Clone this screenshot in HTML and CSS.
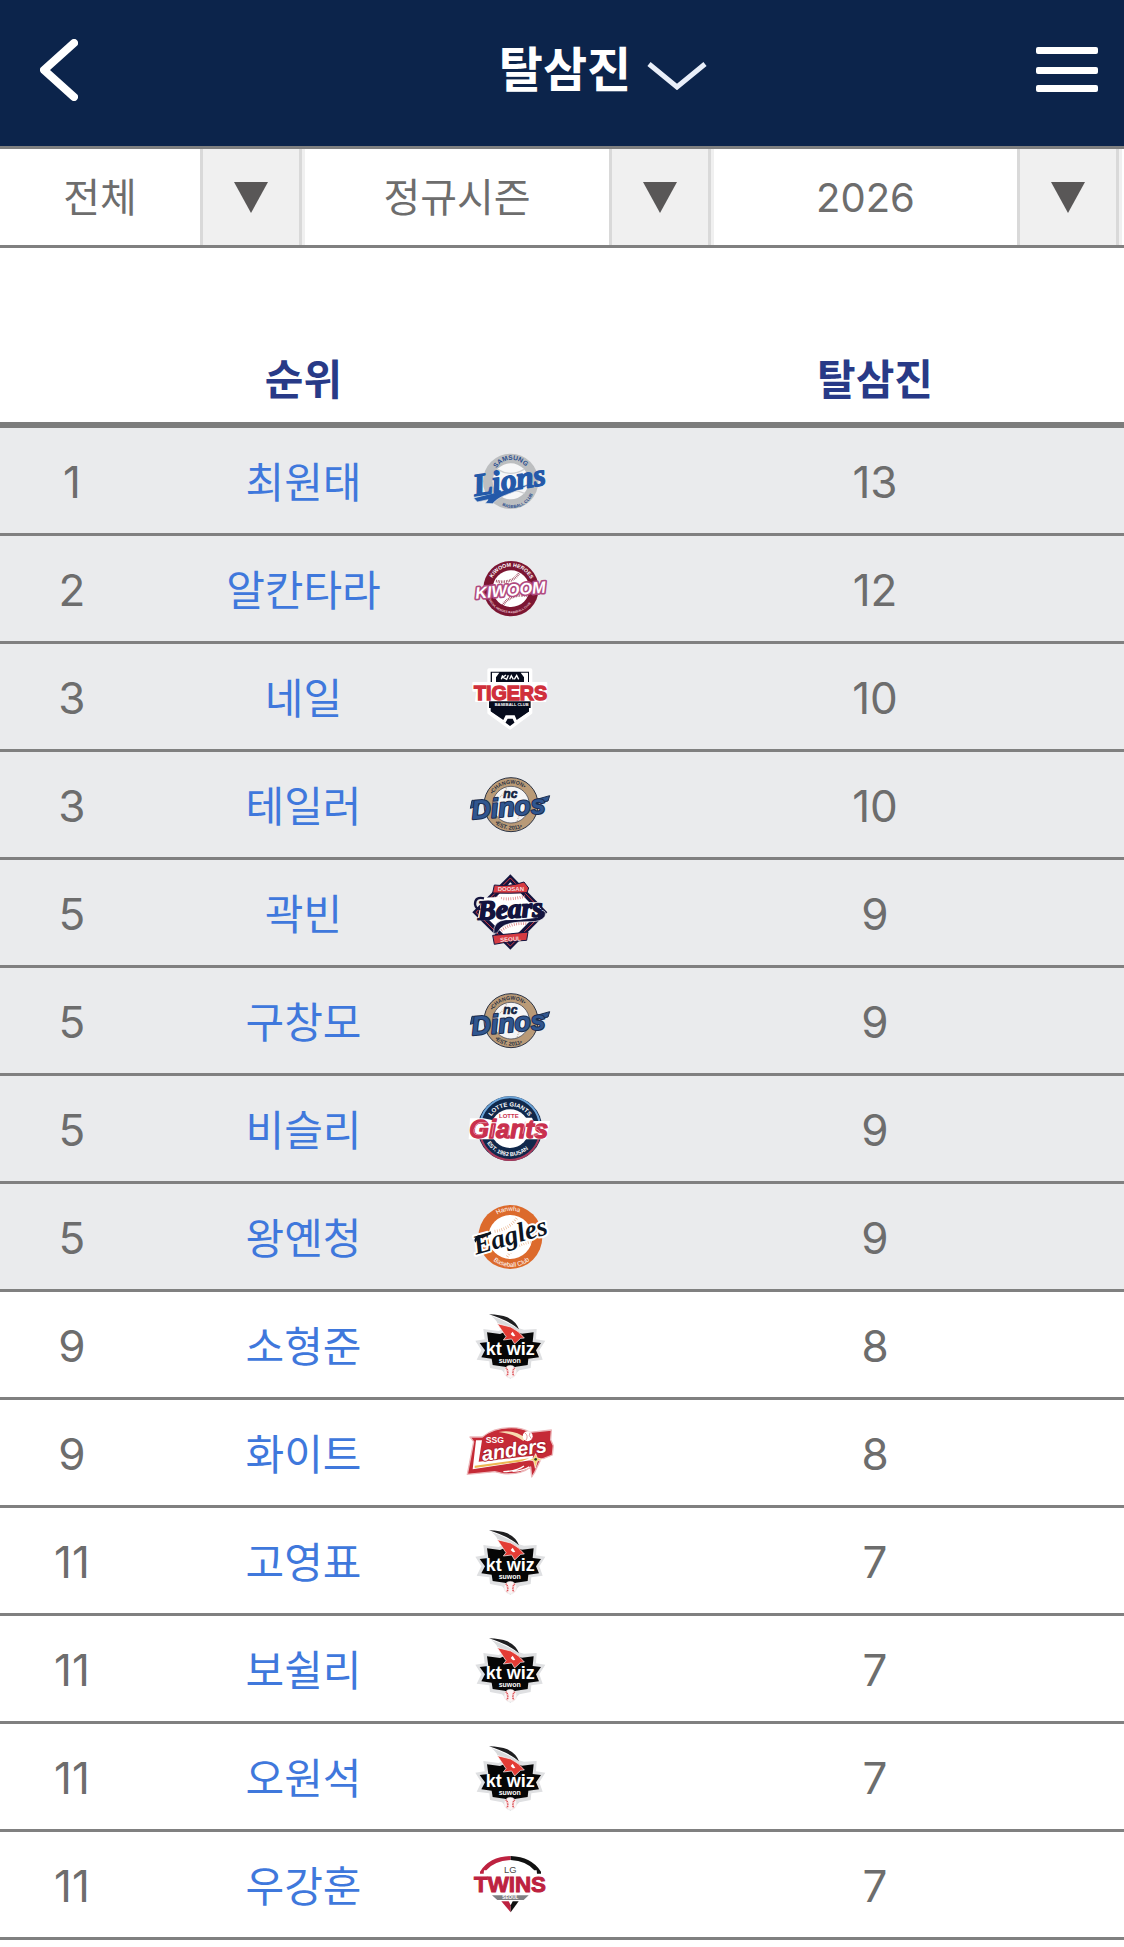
FILE: index.html
```html
<!DOCTYPE html>
<html lang="ko">
<head>
  <meta charset="UTF-8" />
  <meta name="viewport" content="width=device-width, initial-scale=1.0"/>
  <title>탈삼진</title>
  <link rel="stylesheet" href="styles.css">
</head>
<body>

  <header class="header">
    <button class="icon-btn" type="button" aria-label="뒤로">
      <svg width="38" height="62" viewBox="0 0 38 62">
        <path d="M34 4 L4 31 L34 58" fill="none" stroke="#fff" stroke-width="8" stroke-linecap="round" stroke-linejoin="round"/>
      </svg>
    </button>
    <h1>
      <button class="title-btn" type="button">
        <span>탈삼진</span>
        <svg width="60" height="28" viewBox="0 0 60 28">
          <path d="M2 2 L30 25 L58 2" fill="none" stroke="#e9effa" stroke-width="5"/>
        </svg>
      </button>
    </h1>
    <button class="icon-btn menu-btn" type="button" aria-label="메뉴">
      <svg width="62" height="46" viewBox="0 0 62 46">
        <rect width="62" height="7" rx="2" fill="#fff"/>
        <rect y="20" width="62" height="7" rx="2" fill="#fff"/>
        <rect y="38" width="62" height="7" rx="2" fill="#fff"/>
      </svg>
    </button>
  </header>

  <div class="filters">
    <div class="filter">
      <select aria-label="구분"><option>전체</option></select>
      <span class="arrow"><svg width="34" height="31" viewBox="0 0 34 31"><path d="M0 0 H34 L17 31 Z" fill="#595757"/></svg></span>
    </div>
    <div class="filter">
      <select aria-label="시즌"><option>정규시즌</option></select>
      <span class="arrow"><svg width="34" height="31" viewBox="0 0 34 31"><path d="M0 0 H34 L17 31 Z" fill="#595757"/></svg></span>
    </div>
    <div class="filter">
      <select aria-label="연도"><option>2026</option></select>
      <span class="arrow"><svg width="34" height="31" viewBox="0 0 34 31"><path d="M0 0 H34 L17 31 Z" fill="#595757"/></svg></span>
    </div>
  </div>

  <table class="ranking">
    <colgroup>
      <col class="col-rank">
      <col class="col-name">
      <col class="col-team">
      <col class="col-stat">
    </colgroup>
    <thead>
      <tr><td></td><th scope="col">순위</th><td></td><th scope="col">탈삼진</th></tr>
    </thead>
    <tbody>
      <tr class="top">
        <td>1</td>
        <td><a href="#">최원태</a></td>
        <td class="team">
          <svg viewBox="69 25 282 252" role="img" aria-label="삼성">
            <path id="lions-top" d="M169 113 A54 54 0 0 1 264 120" fill="none"/>
            <path id="lions-bottom" d="M186 224 A66 66 0 0 0 280 186" fill="none"/>
            <circle cx="212" cy="152" r="83" fill="#bcbec0"/>
            <circle cx="212" cy="152" r="54" fill="#f7f7f8"/>
            <path d="M172 116 Q212 140 252 116 M176 196 Q212 168 254 188" fill="none" stroke="#cfd0d2" stroke-width="4"/>
            <text class="sans" font-size="20" fill="#2b4f8f"><textPath href="#lions-top">SAMSUNG</textPath></text>
            <text class="sans" font-size="13" fill="#2b4f8f"><textPath href="#lions-bottom">BASEBALL CLUB</textPath></text>
            <path d="M101 202 L140 192 L278 158 Q235 180 200 192 Q172 202 158 219 L136 218 L144 207 L112 214 Z" fill="#2459a9" stroke="#e3e5e8" stroke-width="2"/>
            <text class="serif outline" transform="translate(104 196) rotate(-9)" font-size="94" fill="#2459a9" stroke="#2459a9" stroke-width="4">Lions</text>
          </svg>
        </td>
        <td>13</td>
      </tr>
      <tr class="top">
        <td>2</td>
        <td><a href="#">알칸타라</a></td>
        <td class="team">
          <svg viewBox="69 350 282 252" role="img" aria-label="키움">
            <path id="kiwoom-top" d="M157 443 A64 64 0 0 1 276 460" fill="none"/>
            <path id="kiwoom-bottom" d="M146 508 A75 75 0 0 0 282 502" fill="none"/>
            <circle cx="213" cy="475" r="83" fill="#7c1632"/>
            <circle cx="213" cy="475" r="55" fill="#fff"/>
            <path d="M168 452 Q216 462 238 427 M188 525 Q210 490 262 496" fill="none" stroke="#8d2740" stroke-width="8" stroke-dasharray="2 3"/>
            <text class="sans" font-size="16" fill="#fff"><textPath href="#kiwoom-top">KIWOOM HEROES</textPath></text>
            <text class="sans" font-size="9" fill="#e9c8d2"><textPath href="#kiwoom-bottom">SEOUL HEROES BASEBALL CLUB</textPath></text>
            <text class="sans italic outline" transform="translate(107 505) rotate(-5)" font-size="49" fill="#fff" stroke="#b04a80" stroke-width="10">KIWOOM</text>
          </svg>
        </td>
        <td>12</td>
      </tr>
      <tr class="top">
        <td>3</td>
        <td><a href="#">네일</a></td>
        <td class="team">
          <svg viewBox="69 13 282 252" role="img" aria-label="KIA">
            <path d="M147 58 H272 V186 L210 232 L147 186 Z" fill="#060b1c" stroke="#fff" stroke-width="10" stroke-linejoin="round"/>
            <path d="M156 66 H178 L168 80 V96 H156 Z M264 66 H242 L252 80 V96 H264 Z" fill="#fff"/>
            <path d="M149 180 L190 208 L197 194 H224 L230 208 L271 180 V186 L224 217 L218 204 H203 L196 217 L149 186 Z" fill="#fff"/>
            <path d="M184 86 L188 74 M185 82 L198 73 M189 80 L200 86 L205 74 M209 86 L214 75 L220 86 M223 86 L230 74 L236 86" fill="none" stroke="#fff" stroke-width="4"/>
            <path d="M100 97 H319 V112 L316 151 H108 L112 120 H100 Z" fill="#fff" stroke="#fff" stroke-width="6" stroke-linejoin="round"/>
            <path d="M147 152 H272 V172 H147 Z" fill="#060b1c"/>
            <text class="sans" x="102" y="147" font-size="59" fill="#d0303c" stroke="#d0303c" stroke-width="4">TIGERS</text>
            <text class="sans" x="164" y="165" font-size="12" fill="#fff">BASEBALL CLUB</text>
          </svg>
        </td>
        <td>10</td>
      </tr>
      <tr class="top">
        <td>3</td>
        <td><a href="#">테일러</a></td>
        <td class="team">
          <svg viewBox="69 338 282 252" role="img" aria-label="NC">
            <g id="dinos">
              <path id="dinos-top" d="M158 432 A64 64 0 0 1 274 444" fill="none"/>
              <path id="dinos-bottom" d="M164 518 A74 74 0 0 0 274 508" fill="none"/>
              <circle cx="213" cy="463" r="81" fill="#b99a77" stroke="#2c3445" stroke-width="3"/>
              <circle cx="213" cy="463" r="55" fill="#f5f5f6" stroke="#2c3445" stroke-width="2"/>
              <path d="M164 448 Q190 440 200 412 M232 512 Q236 490 264 478" fill="none" stroke="#c9b7a5" stroke-width="4" stroke-dasharray="3 3"/>
              <text class="sans" font-size="16" fill="#2c3445"><textPath href="#dinos-top">•CHANGWON•</textPath></text>
              <text class="sans" font-size="17" fill="#2c3445"><textPath href="#dinos-bottom">•EST. 2011•</textPath></text>
              <text class="sans italic" x="190" y="443" font-size="36" fill="#14233f" stroke="#14233f" stroke-width="2">nc</text>
              <path d="M91 474 L96 450 H122 L116 466 Z" fill="#30568f" stroke="#1b2d4f" stroke-width="3"/>
              <path d="M283 449 L329 436 L324 452 L290 460 Z" fill="#30568f" stroke="#1b2d4f" stroke-width="3"/>
              <text class="sans italic outline" transform="translate(97 507) rotate(-5)" font-size="80" fill="#30568f" stroke="#1b2d4f" stroke-width="6">Dinos</text>
            </g>
          </svg>
        </td>
        <td>10</td>
      </tr>
      <tr class="top">
        <td>5</td>
        <td><a href="#">곽빈</a></td>
        <td class="team">
          <svg viewBox="69 32 282 252" role="img" aria-label="두산">
            <path d="M211 42 L322 156 L211 268 L97 156 Z" fill="#14143e"/>
            <path d="M211 53 L311 156 L211 257 L108 156 Z" fill="none" stroke="#d63b42" stroke-width="3"/>
            <path d="M211 66 L296 156 L211 242 L124 156 Z" fill="#fff"/>
            <path d="M163 111 Q208 122 256 107 M184 210 Q216 186 260 190" fill="none" stroke="#dc6d72" stroke-width="9" stroke-dasharray="2 5"/>
            <path d="M163 74 Q208 80 252 65 L266 83 L261 97 Q210 100 158 98 Z" fill="#d63b42" stroke="#14143e" stroke-width="3"/>
            <path d="M158 225 Q210 221 264 215 L260 240 L214 243 L163 252 Z" fill="#d63b42" stroke="#14143e" stroke-width="3"/>
            <text class="sans" x="173" y="92" font-size="18" fill="#f8dcdc">DOOSAN</text>
            <text class="sans" transform="translate(181 245) rotate(-4)" font-size="18" fill="#f8dcdc">SEOUL</text>
            <path d="M161 220 Q158 182 198 178 Q258 178 294 170 L306 150 Q320 152 315 168 Q305 185 270 184 Q200 183 181 204 Q176 214 170 218 Z" fill="#14143e" stroke="#fff" stroke-width="2"/>
            <path d="M112 180 L126 112 L180 110 L192 126 L300 126 L306 160 L240 178 Z" fill="#fff"/>
            <text class="serif outline" transform="translate(114 178) rotate(-3)" font-size="82" fill="#14143e" stroke="#14143e" stroke-width="5">Bears</text>
            <path d="M132 114 Q105 108 105 132 Q108 148 121 145" fill="none" stroke="#14143e" stroke-width="7"/>
          </svg>
        </td>
        <td>9</td>
      </tr>
      <tr class="top">
        <td>5</td>
        <td><a href="#">구창모</a></td>
        <td class="team">
          <svg viewBox="69 338 282 252" role="img" aria-label="NC"><use href="#dinos"/></svg>
        </td>
        <td>9</td>
      </tr>
      <tr class="top">
        <td>5</td>
        <td><a href="#">비슬리</a></td>
        <td class="team">
          <svg viewBox="69 20 282 252" role="img" aria-label="롯데">
            <path id="giants-top" d="M154 108 A67 67 0 0 1 276 135" fill="none"/>
            <path id="giants-bottom" d="M141 188 A81 81 0 0 0 284 180" fill="none"/>
            <circle cx="210" cy="145" r="97" fill="#10284b"/>
            <path d="M122 122 A90 90 0 0 1 298 122" fill="none" stroke="#6ba4d9" stroke-width="6"/>
            <path d="M122 168 A90 90 0 0 0 298 168" fill="none" stroke="#a83a5b" stroke-width="6"/>
            <circle cx="210" cy="145" r="58" fill="#fff"/>
            <text class="sans" font-size="18" fill="#fff"><textPath href="#giants-top">LOTTE GIANTS</textPath></text>
            <text class="sans" font-size="17" fill="#fff"><textPath href="#giants-bottom">EST. 1982 BUSAN</textPath></text>
            <text class="sans" x="177" y="114" font-size="18" fill="#c9304e">LOTTE</text>
            <path d="M90 114 H130 L160 120 H242 L252 112 H276 L280 122 H330 L318 177 H86 Z" fill="#fff"/>
            <text class="sans italic outline" x="88" y="172" font-size="76" fill="#c9304e" stroke="#c9304e" stroke-width="4">Giants</text>
            <path d="M140 127 H118 Q107 129 102 148 Q100 163 112 163 H126 L129 147 M161 133 L155 169 M208 140 L203 169 M256 124 L248 160 M308 139 Q285 135 287 145 Q303 152 299 161 Q290 167 273 163" fill="none" stroke="#f0b9c4" stroke-width="2"/>
          </svg>
        </td>
        <td>9</td>
      </tr>
      <tr class="top">
        <td>5</td>
        <td><a href="#">왕옌청</a></td>
        <td class="team">
          <svg viewBox="69 343 282 252" role="img" aria-label="한화">
            <path id="eagles-top" d="M172 402 A78 78 0 0 1 262 408" fill="none"/>
            <path id="eagles-bottom" d="M160 540 A88 88 0 0 0 284 524" fill="none"/>
            <circle cx="211" cy="469" r="96" fill="#dc6a2c"/>
            <circle cx="211" cy="469" r="66" fill="#fff"/>
            <path d="M164 452 Q208 446 232 410 M202 528 Q224 492 272 484" fill="none" stroke="#e9b48f" stroke-width="9" stroke-dasharray="2 5"/>
            <text class="plain" font-size="19" fill="#fff"><textPath href="#eagles-top">Hanwha</textPath></text>
            <text class="plain" font-size="19" fill="#fff"><textPath href="#eagles-bottom">Baseball Club</textPath></text>
            <text class="serif outline" transform="translate(108 522) rotate(-16)" font-size="82" fill="#0c1522" stroke="#fff" stroke-width="12">Eagles</text>
            <path d="M103 478 Q108 460 128 464 L152 452 L154 460 L128 472 Q114 470 106 486 Z" fill="#0c1522"/>
          </svg>
        </td>
        <td>9</td>
      </tr>
      <tr>
        <td>9</td>
        <td><a href="#">소형준</a></td>
        <td class="team">
          <svg viewBox="69 8 282 252" role="img" aria-label="KT">
            <g id="wiz">
              <path d="M130 86 L176 92 L210 76 L252 88 L290 86 L288 117 L316 121 L298 150 L308 178 L274 183 L272 203 L238 210 L211 236 L186 210 L150 203 L148 183 L110 178 L124 150 L106 121 L134 117 Z" fill="#dfe0e2"/>
              <path d="M141 96 L180 101 L210 88 L246 100 L281 96 L278 125 L303 128 L288 150 L297 171 L265 175 L263 194 L228 199 L211 207 L194 199 L158 194 L155 175 L124 171 L135 150 L119 128 L145 125 Z" fill="#060606"/>
              <path d="M147 42 Q181 43 202 51 Q228 62 237 87 L224 77 Q197 58 147 42 Z" fill="#1f1f21"/>
              <path d="M154 47 Q190 58 225 80 L239 96 L210 86 L172 68 Q170 60 154 47 Z" fill="#d9dadc"/>
              <path d="M172 70 L212 80 Q236 91 253 113 L242 114 L224 131 L215 116 L190 119 L198 109 Z" fill="#e33c35" stroke="#fff" stroke-width="2"/>
              <path d="M212 101 L218 94 L226 107 L219 108 Z" fill="#fff"/>
              <circle cx="211" cy="214" r="19" fill="#faf4f4" stroke="#e3e0e0" stroke-width="1"/>
              <path d="M198 202 Q207 214 201 227 M224 202 Q215 214 221 227" fill="none" stroke="#dd4a50" stroke-width="5" stroke-dasharray="3 2"/>
              <text class="sans" x="137" y="165" font-size="54" fill="#fff">kt wiz</text>
              <text class="sans" x="176" y="187" font-size="21" fill="#fff">suwon</text>
            </g>
          </svg>
        </td>
        <td>8</td>
      </tr>
      <tr>
        <td>9</td>
        <td><a href="#">화이트</a></td>
        <td class="team">
          <svg viewBox="69 332 282 252" role="img" aria-label="SSG">
            <path d="M90 410 L127 410 Q160 382 214 382 Q248 382 270 396 L334 389 L332 418 L340 436 L337 464 L302 478 L284 516 L275 530 L272 500 Q242 524 190 520 L164 514 L82 522 L101 424 Z" fill="#c52a36" stroke="#ecb7ba" stroke-width="4" stroke-linejoin="round"/>
            <path d="M176 395 Q222 386 258 414 L250 422 Q222 400 176 395 Z" fill="#f7dcb1"/>
            <circle cx="263" cy="408" r="15" fill="#fff"/>
            <path d="M255 398 Q266 406 258 420 M270 397 Q264 406 274 415" fill="none" stroke="#d9666c" stroke-width="2"/>
            <text class="sans" x="137" y="427" font-size="26" fill="#fff">SSG</text>
            <path d="M108 420 H126 L116 484 L242 470 L280 466 L276 479 L98 507 Z" fill="#fff"/>
            <path d="M104 496 L268 474 L240 484 L104 503 Z" fill="#edb652"/>
            <path d="M190 514 Q232 512 252 497 M218 513 Q252 511 268 499" fill="none" stroke="#fff" stroke-width="4"/>
            <text class="sans italic outline" transform="translate(128 482) rotate(-8)" font-size="60" fill="#fff" stroke="#a81d2b" stroke-width="5">anders</text>
            <path d="M287 460 L292 473 L309 477 L292 482 L286 504 L281 482 L268 478 L281 473 Z" fill="#f6d36b" stroke="#fff" stroke-width="2"/>
            <circle cx="287" cy="477" r="4" fill="#25442c"/>
          </svg>
        </td>
        <td>8</td>
      </tr>
      <tr>
        <td>11</td>
        <td><a href="#">고영표</a></td>
        <td class="team">
          <svg viewBox="69 8 282 252" role="img" aria-label="KT"><use href="#wiz"/></svg>
        </td>
        <td>7</td>
      </tr>
      <tr>
        <td>11</td>
        <td><a href="#">보쉴리</a></td>
        <td class="team">
          <svg viewBox="69 8 282 252" role="img" aria-label="KT"><use href="#wiz"/></svg>
        </td>
        <td>7</td>
      </tr>
      <tr>
        <td>11</td>
        <td><a href="#">오원석</a></td>
        <td class="team">
          <svg viewBox="69 8 282 252" role="img" aria-label="KT"><use href="#wiz"/></svg>
        </td>
        <td>7</td>
      </tr>
      <tr>
        <td>11</td>
        <td><a href="#">우강훈</a></td>
        <td class="team">
          <svg viewBox="69 8 282 252" role="img" aria-label="LG">
            <path d="M120 94 Q148 49 212 47 V59 Q162 62 139 90 L132 90 L131 100 L120 100 Z" fill="#bd2240"/>
            <path d="M212 47 Q274 49 303 94 V100 H291 L290 90 L283 90 Q260 62 212 59 Z" fill="#111"/>
            <text class="plain" x="192" y="98" font-size="28" fill="#4a4a4a">LG</text>
            <text class="sans" x="102" y="155" font-size="67" fill="#bd2240" stroke="#bd2240" stroke-width="3">TWINS</text>
            <path d="M156 165 H266 L251 179 H172 Z" fill="#7f8083"/>
            <text class="sans" x="187" y="177" font-size="14" fill="#fff">SEOUL</text>
            <path d="M184 183 H206 L212 195 V216 Z" fill="#bd2240"/>
            <path d="M236 183 H218 L212 195 V216 Z" fill="#111"/>
          </svg>
        </td>
        <td>7</td>
      </tr>
    </tbody>
  </table>

</body>
</html>
```
FILE: styles.css
```css
* {
  box-sizing: border-box;
  margin: 0;
  padding: 0;
}

body {
  font-family: Inter, 'Noto Sans CJK KR', sans-serif;
  background-color: #fff;
  color: #6d6d6d;
}

button {
  background: none;
  border: none;
  color: inherit;
  font: inherit;
  cursor: pointer;
}

svg {
  display: block;
}

.header {
  display: grid;
  grid-template-columns: 1fr auto 1fr;
  align-items: center;
  height: 149px;
  padding: 0 26px 6px 40px;
  background-color: #0c244b;
  border-bottom: 3px solid #808080;
  color: #fff;
}

h1 {
  font-size: 48px;
  line-height: 64px;
}

.icon-btn {
  justify-self: start;
}

.menu-btn {
  justify-self: end;
}

.title-btn {
  display: flex;
  align-items: center;
  gap: 16px;
  padding-left: 68px;
}

.title-btn svg {
  margin-top: 12px;
}

.filters {
  display: grid;
  grid-template-columns: 305fr 409fr 408fr;
  height: 99px;
  padding-right: 2px;
  border-bottom: 3px solid #808080;
}

.filter {
  display: grid;
  grid-template-columns: 1fr 102px;
  border-right: 3px solid #f0f0f0;
}

.filter select {
  grid-area: 1 / 1 / 2 / 3;
  width: 100%;
  padding-right: 102px;
  border: none;
  background-color: #fff;
  color: #6d6d6d;
  font-family: inherit;
  font-size: 40px;
  text-align: center;
  text-align-last: center;
  appearance: none;
  cursor: pointer;
}

.arrow {
  grid-area: 1 / 2 / 2 / 3;
  z-index: 1;
  display: flex;
  align-items: center;
  justify-content: center;
  background-color: #f0f0f0;
  border: solid #d9d9d9;
  border-width: 0 3px;
  pointer-events: none;
}

.ranking {
  width: 100%;
  margin-top: 84px;
  border-collapse: separate;
  border-spacing: 0;
  table-layout: fixed;
  text-align: center;
}

.col-rank {
  width: 12.8%;
}

.col-name {
  width: 28.4%;
}

.col-team {
  width: 14.5%;
}

.ranking th,
.ranking thead td {
  height: 96px;
  padding-top: 6px;
  border-bottom: 6px solid #7c7c7c;
  color: #283a87;
  font-size: 42px;
  line-height: 60px;
}

.ranking tbody td {
  height: 108px;
  padding-top: 3px;
  border-bottom: 3px solid #808080;
  font-size: 44px;
  line-height: 60px;
}

.ranking tbody .team {
  padding-top: 0;
}

.ranking .top {
  background-color: #eaebed;
}

.ranking a {
  color: #3f78dc;
  font-size: 42px;
  text-decoration: none;
}

/* team logos */
.team svg {
  width: 94px;
  height: 84px;
}

.sans {
  font-family: 'Liberation Sans', sans-serif;
  font-weight: bold;
}

.plain {
  font-family: 'Liberation Sans', sans-serif;
}

.serif {
  font-family: 'Liberation Serif', serif;
  font-weight: bold;
  font-style: italic;
}

.italic {
  font-style: italic;
}

.outline {
  paint-order: stroke;
  stroke-linejoin: round;
}
```
